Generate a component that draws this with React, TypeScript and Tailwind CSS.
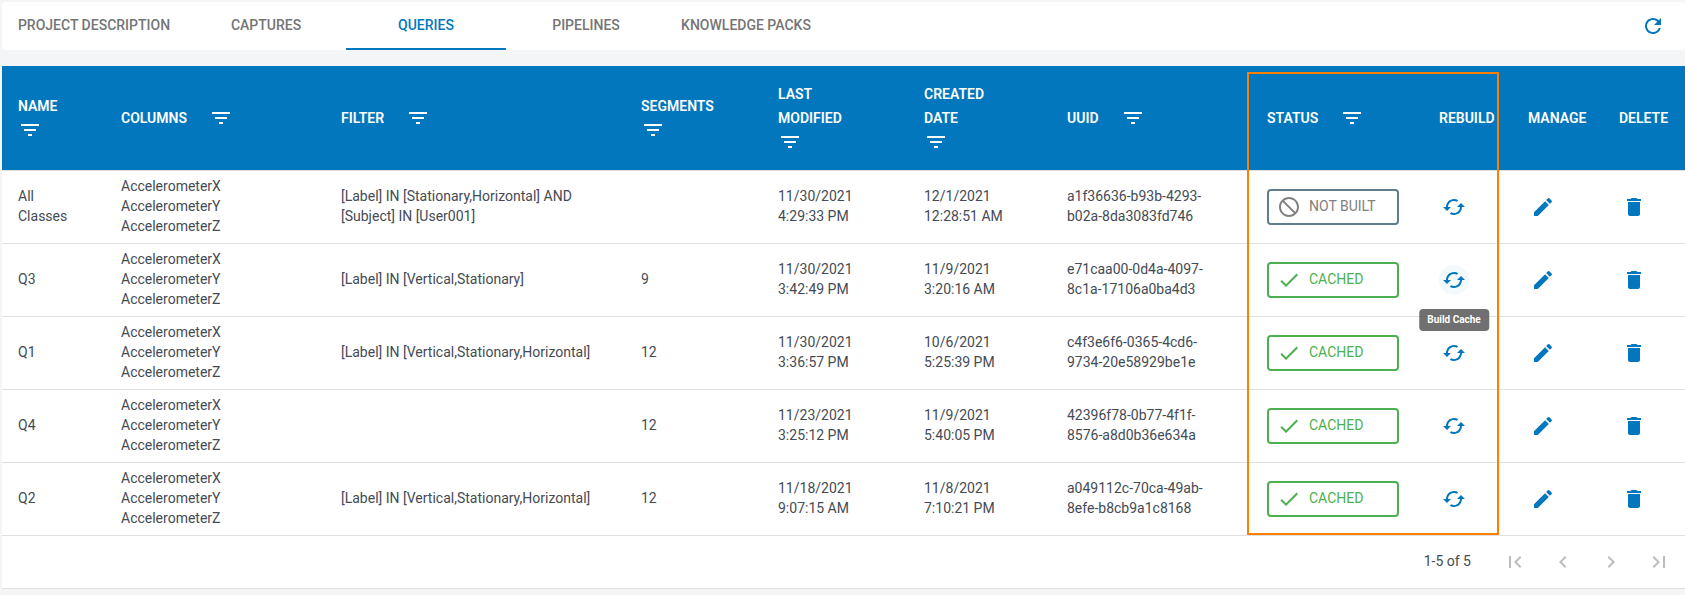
import { useState } from "react";
import type { ReactNode } from "react";
import {
  MdCached,
  MdCheck,
  MdChevronLeft,
  MdChevronRight,
  MdDelete,
  MdEdit,
  MdFilterList,
  MdFirstPage,
  MdLastPage,
  MdNotInterested,
  MdRefresh,
} from "react-icons/md";

type Query = {
  name: string[];
  filter: string;
  segments: string;
  modified: string[];
  created: string[];
  uuid: string[];
  cached: boolean;
};

const sensorColumns = ["AccelerometerX", "AccelerometerY", "AccelerometerZ"];

const queries: Query[] = [
  {
    name: ["All", "Classes"],
    filter: "[Label] IN [Stationary,Horizontal] AND [Subject] IN [User001]",
    segments: "",
    modified: ["11/30/2021", "4:29:33 PM"],
    created: ["12/1/2021", "12:28:51 AM"],
    uuid: ["a1f36636-b93b-4293-", "b02a-8da3083fd746"],
    cached: false,
  },
  {
    name: ["Q3"],
    filter: "[Label] IN [Vertical,Stationary]",
    segments: "9",
    modified: ["11/30/2021", "3:42:49 PM"],
    created: ["11/9/2021", "3:20:16 AM"],
    uuid: ["e71caa00-0d4a-4097-", "8c1a-17106a0ba4d3"],
    cached: true,
  },
  {
    name: ["Q1"],
    filter: "[Label] IN [Vertical,Stationary,Horizontal]",
    segments: "12",
    modified: ["11/30/2021", "3:36:57 PM"],
    created: ["10/6/2021", "5:25:39 PM"],
    uuid: ["c4f3e6f6-0365-4cd6-", "9734-20e58929be1e"],
    cached: true,
  },
  {
    name: ["Q4"],
    filter: "",
    segments: "12",
    modified: ["11/23/2021", "3:25:12 PM"],
    created: ["11/9/2021", "5:40:05 PM"],
    uuid: ["42396f78-0b77-4f1f-", "8576-a8d0b36e634a"],
    cached: true,
  },
  {
    name: ["Q2"],
    filter: "[Label] IN [Vertical,Stationary,Horizontal]",
    segments: "12",
    modified: ["11/18/2021", "9:07:15 AM"],
    created: ["11/8/2021", "7:10:21 PM"],
    uuid: ["a049112c-70ca-49ab-", "8efe-b8cb9a1c8168"],
    cached: true,
  },
];

const tabs = [
  { label: "PROJECT DESCRIPTION", width: "w-[184px]" },
  { label: "CAPTURES", width: "w-40" },
  { label: "QUERIES", width: "w-40" },
  { label: "PIPELINES", width: "w-40" },
  { label: "KNOWLEDGE PACKS", width: "w-40" },
];

const headers: { lines: string[]; width: string; filter: "inline" | "below" | "none" }[] = [
  { lines: ["NAME"], width: "w-[103px]", filter: "below" },
  { lines: ["COLUMNS"], width: "w-[220px]", filter: "inline" },
  { lines: ["FILTER"], width: "w-[300px]", filter: "inline" },
  { lines: ["SEGMENTS"], width: "w-[137px]", filter: "below" },
  { lines: ["LAST", "MODIFIED"], width: "w-[146px]", filter: "below" },
  { lines: ["CREATED", "DATE"], width: "w-[143px]", filter: "below" },
  { lines: ["UUID"], width: "w-[200px]", filter: "inline" },
  { lines: ["STATUS"], width: "w-[172px]", filter: "inline" },
  { lines: ["REBUILD"], width: "w-[89px]", filter: "none" },
  { lines: ["MANAGE"], width: "w-[91px]", filter: "none" },
  { lines: ["DELETE"], width: "w-[82px]", filter: "none" },
];

const textCell = "border-b border-[#e0e0e0] px-4 pt-[5px] pb-[7px]";
const actionCell = "border-b border-[#e0e0e0] px-4 py-1.5";

function Lines({ items }: { items: string[] }) {
  return (
    <>
      {items.map((item) => (
        <span key={item} className="block">
          {item}
        </span>
      ))}
    </>
  );
}

function RowAction({ label, children, tooltip }: { label: string; children: ReactNode; tooltip?: string }) {
  return (
    <button
      type="button"
      aria-label={label}
      className={`relative block rounded-full p-[3px] text-[#0277bd] ${tooltip ? "bg-[#f4f9fc]" : ""}`}
    >
      {children}
      {tooltip && (
        <span
          role="tooltip"
          className="absolute top-full left-1/2 z-10 mt-3.5 -translate-x-1/2 rounded bg-[#616161]/90 px-2 py-1 text-[10px] leading-[14px] font-bold whitespace-nowrap text-white"
        >
          {tooltip}
        </span>
      )}
    </button>
  );
}

function StatusButton({ cached }: { cached: boolean }) {
  return (
    <button
      type="button"
      className={`flex h-9 w-[132px] items-center gap-2 rounded border-2 px-2 ${
        cached ? "border-[#4caf50] text-[#4caf50]" : "border-[#607d8b] text-[#808080]"
      }`}
    >
      {cached ? <MdCheck size={24} /> : <MdNotInterested size={24} />}
      <span className="pb-0.5">{cached ? "CACHED" : "NOT BUILT"}</span>
    </button>
  );
}

export default function App() {
  const [active, setActive] = useState("QUERIES");
  const pageButtons = [
    { label: "First page", Icon: MdFirstPage },
    { label: "Previous page", Icon: MdChevronLeft },
    { label: "Next page", Icon: MdChevronRight },
    { label: "Last page", Icon: MdLastPage },
  ];

  return (
    <div className="min-h-screen bg-[#f4f5f7] pt-0.5 pl-0.5 font-[Roboto,sans-serif] text-sm leading-5 text-[#444b54]">
      <header className="flex h-12 items-center justify-between rounded bg-white pr-5">
        <nav role="tablist" className="flex h-full">
          {tabs.map((tab) => (
            <button
              key={tab.label}
              type="button"
              role="tab"
              aria-selected={active === tab.label}
              onClick={() => setActive(tab.label)}
              className={`${tab.width} border-b-2 text-center font-medium whitespace-nowrap ${
                active === tab.label ? "border-[#0277bd] text-[#0277bd]" : "border-transparent text-[#757575]"
              }`}
            >
              {tab.label}
            </button>
          ))}
        </nav>
        <button type="button" aria-label="Refresh" className="text-[#0277bd]">
          <MdRefresh size={24} />
        </button>
      </header>

      <main className="mt-4 border-b border-[#e0e0e0] bg-white">
        <div className="relative">
          <table className="w-full table-fixed border-separate border-spacing-0 text-left">
            <thead className="bg-[#0277bd] leading-6 text-white">
              <tr>
                {headers.map(({ lines, width, filter }) => (
                  <th
                    key={lines.join(" ")}
                    scope="col"
                    className={`${width} border-b border-[#e0e0e0] p-4 font-semibold`}
                  >
                    <div className={filter === "inline" ? "flex items-center gap-[22px]" : ""}>
                      <span className="block">
                        <Lines items={lines} />
                      </span>
                      {filter !== "none" && (
                        <button type="button" aria-label={`Filter ${lines.join(" ")}`} className="block">
                          <MdFilterList size={24} />
                        </button>
                      )}
                    </div>
                  </th>
                ))}
              </tr>
            </thead>
            <tbody>
              {queries.map((query) => {
                const name = query.name.join(" ");
                return (
                  <tr key={name}>
                    <td className={textCell}>
                      <Lines items={query.name} />
                    </td>
                    <td className={textCell}>
                      <Lines items={sensorColumns} />
                    </td>
                    <td className={textCell}>{query.filter}</td>
                    <td className={textCell}>{query.segments}</td>
                    <td className={textCell}>
                      <Lines items={query.modified} />
                    </td>
                    <td className={textCell}>
                      <Lines items={query.created} />
                    </td>
                    <td className={textCell}>
                      <Lines items={query.uuid} />
                    </td>
                    <td className={actionCell}>
                      <StatusButton cached={query.cached} />
                    </td>
                    <td className={actionCell}>
                      <RowAction label={`Rebuild ${name}`} tooltip={name === "Q3" ? "Build Cache" : undefined}>
                        <MdCached size={24} />
                      </RowAction>
                    </td>
                    <td className={actionCell}>
                      <RowAction label={`Edit ${name}`}>
                        <MdEdit size={24} />
                      </RowAction>
                    </td>
                    <td className={actionCell}>
                      <RowAction label={`Delete ${name}`}>
                        <MdDelete size={24} />
                      </RowAction>
                    </td>
                  </tr>
                );
              })}
            </tbody>
          </table>
          <div className="pointer-events-none absolute top-1.5 right-[186px] bottom-px w-[252px] border-2 border-[#ff8000]" />
        </div>

        <footer className="flex h-[52px] items-center justify-end pr-0.5">
          <span className="mr-5 pb-0.5">1-5 of 5</span>
          {pageButtons.map(({ label, Icon }) => (
            <button key={label} type="button" aria-label={label} disabled className="p-3 text-[#bdbdbd]">
              <Icon size={24} />
            </button>
          ))}
        </footer>
      </main>
    </div>
  );
}
